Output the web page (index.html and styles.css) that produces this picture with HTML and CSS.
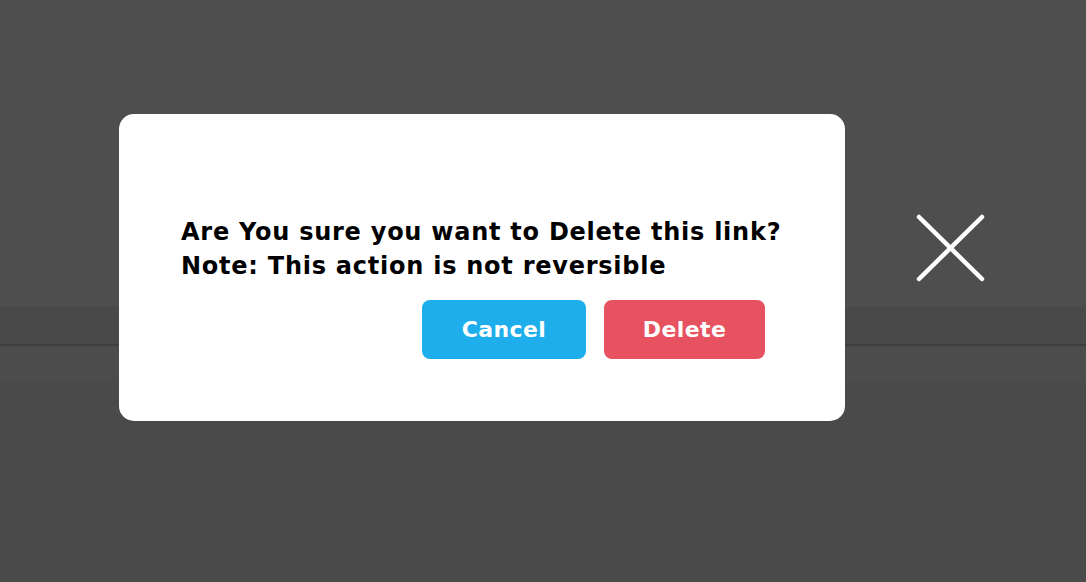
FILE: index.html
```html
<!DOCTYPE html>
<html>
<head>
<meta charset="utf-8">
<link rel="stylesheet" href="styles.css">
</head>
<body>
<div class="page">
  <div class="zone-top"></div>
  <div class="zone-band"></div>
  <div class="zone-rule"></div>
  <div class="zone-row"></div>
  <div class="zone-rest"></div>
</div>
<div class="modal">
  <p class="msg">Are You sure you want to Delete this link?<br>Note: This action is not reversible</p>
  <div class="actions">
    <button class="btn btn-cancel">Cancel</button>
    <button class="btn btn-delete">Delete</button>
  </div>
</div>
<button class="close" aria-label="Close">
  <svg width="70" height="70" viewBox="0 0 70 70"><path d="M3 3 L66 65 M66 3 L3 65" stroke="#fff" stroke-width="4.5" stroke-linecap="round" fill="none"/></svg>
</button>
</body>
</html>
```
FILE: styles.css
```css
* { box-sizing: border-box; }
html, body { margin: 0; padding: 0; }
body {
  width: 1086px;
  height: 582px;
  overflow: hidden;
  background: #4a4a4a;
  font-family: "DejaVu Sans", Inter, sans-serif;
  position: relative;
}
.page { display: flex; flex-direction: column; }
.zone-top { height: 307px; background: #4e4e4e; }
.zone-band { height: 37px; background: #494949; }
.zone-rule { height: 2px; background: #3e3e3e; }
.zone-row { height: 36px; background: #4c4c4c; }
.zone-rest { height: 200px; background: #4a4a4a; }
.modal {
  position: absolute;
  left: 119px;
  top: 114px;
  width: 726px;
  height: 307px;
  background: #fff;
  border-radius: 15px;
  padding: 101px 50px 62px 62px;
  display: flex;
  flex-direction: column;
}
.msg {
  margin: 0;
  font-size: 24px;
  line-height: 34px;
  font-weight: 700;
  color: #000;
  letter-spacing: 0.75px;
  white-space: nowrap;
}
.actions {
  margin-top: auto;
  padding-right: 30px;
  display: flex;
  justify-content: flex-end;
  gap: 18px;
}
.btn {
  border: 0;
  border-radius: 8px;
  height: 59px;
  padding: 0;
  color: #fff;
  font-family: inherit;
  font-size: 22px;
  font-weight: 700;
  letter-spacing: 0.4px;
}
.btn-cancel { width: 164px; background: #1eaeeb; }
.btn-delete { width: 161px; background: #e6525f; }
.close {
  position: absolute;
  left: 916px;
  top: 214px;
  width: 70px;
  height: 70px;
  padding: 0;
  border: 0;
  background: none;
}
.close svg { display: block; }
```
